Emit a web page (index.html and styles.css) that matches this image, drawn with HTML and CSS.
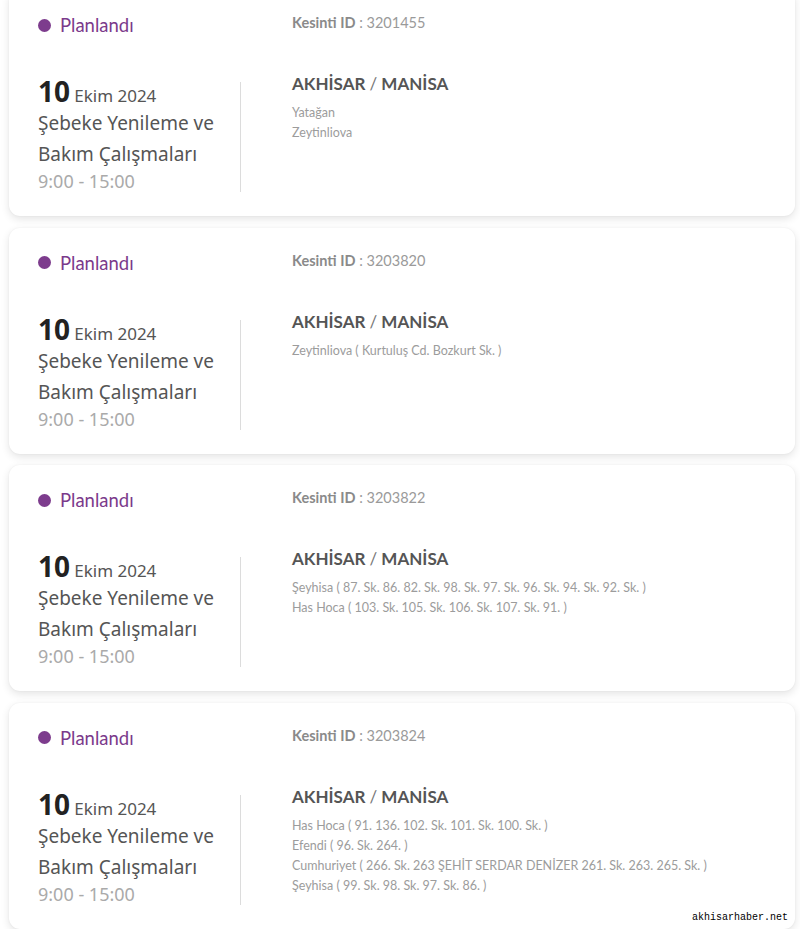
FILE: index.html
```html
<!DOCTYPE html>
<html lang="tr">

<head>
    <meta charset="UTF-8" />
    <meta name="viewport" content="width=device-width, initial-scale=1" />
    <title>Planlı Kesintiler</title>
    <link rel="stylesheet" href="styles.css">
</head>

<body>
    <div class="kesintiler">
        <div class="kart">
            <div class="ust">
                <div class="durum"><span class="nokta"></span>Planlandı</div>
                <div class="kid"><b>Kesinti ID</b> : 3201455</div>
            </div>
            <div class="govde">
                <div class="sol">
                    <div class="tarih"><span class="gun">10</span> <span class="ay">Ekim 2024</span></div>
                    <div class="baslik">Şebeke Yenileme ve Bakım Çalışmaları</div>
                    <div class="saat">9:00 - 15:00</div>
                </div>
                <div class="sag">
                    <h3>AKHİSAR <span>/</span> MANİSA</h3>
                    <ul class="mahalle">
                        <li>Yatağan</li>
                        <li>Zeytinliova</li>
                    </ul>
                </div>
            </div>
        </div>

        <div class="kart">
            <div class="ust">
                <div class="durum"><span class="nokta"></span>Planlandı</div>
                <div class="kid"><b>Kesinti ID</b> : 3203820</div>
            </div>
            <div class="govde">
                <div class="sol">
                    <div class="tarih"><span class="gun">10</span> <span class="ay">Ekim 2024</span></div>
                    <div class="baslik">Şebeke Yenileme ve Bakım Çalışmaları</div>
                    <div class="saat">9:00 - 15:00</div>
                </div>
                <div class="sag">
                    <h3>AKHİSAR <span>/</span> MANİSA</h3>
                    <ul class="mahalle">
                        <li>Zeytinliova ( Kurtuluş Cd. Bozkurt Sk. )</li>
                    </ul>
                </div>
            </div>
        </div>

        <div class="kart">
            <div class="ust">
                <div class="durum"><span class="nokta"></span>Planlandı</div>
                <div class="kid"><b>Kesinti ID</b> : 3203822</div>
            </div>
            <div class="govde">
                <div class="sol">
                    <div class="tarih"><span class="gun">10</span> <span class="ay">Ekim 2024</span></div>
                    <div class="baslik">Şebeke Yenileme ve Bakım Çalışmaları</div>
                    <div class="saat">9:00 - 15:00</div>
                </div>
                <div class="sag">
                    <h3>AKHİSAR <span>/</span> MANİSA</h3>
                    <ul class="mahalle">
                        <li>Şeyhisa ( 87. Sk. 86. 82. Sk. 98. Sk. 97. Sk. 96. Sk. 94. Sk. 92. Sk. )</li>
                        <li>Has Hoca ( 103. Sk. 105. Sk. 106. Sk. 107. Sk. 91. )</li>
                    </ul>
                </div>
            </div>
        </div>

        <div class="kart">
            <div class="ust">
                <div class="durum"><span class="nokta"></span>Planlandı</div>
                <div class="kid"><b>Kesinti ID</b> : 3203824</div>
            </div>
            <div class="govde">
                <div class="sol">
                    <div class="tarih"><span class="gun">10</span> <span class="ay">Ekim 2024</span></div>
                    <div class="baslik">Şebeke Yenileme ve Bakım Çalışmaları</div>
                    <div class="saat">9:00 - 15:00</div>
                </div>
                <div class="sag">
                    <h3>AKHİSAR <span>/</span> MANİSA</h3>
                    <ul class="mahalle">
                        <li>Has Hoca ( 91. 136. 102. Sk. 101. Sk. 100. Sk. )</li>
                        <li>Efendi ( 96. Sk. 264. )</li>
                        <li>Cumhuriyet ( 266. Sk. 263 ŞEHİT SERDAR DENİZER 261. Sk. 263. 265. Sk. )</li>
                        <li>Şeyhisa ( 99. Sk. 98. Sk. 97. Sk. 86. )</li>
                    </ul>
                </div>
            </div>
        </div>
    </div>

    <div class="filigran">akhisarhaber.net</div>
</body>

</html>
```

FILE: styles.css
```css
body {
    margin: 0;
    background: #ffffff;
    font-family: "Lato", "Noto Sans", sans-serif;
}

.kesintiler {
    display: flex;
    flex-direction: column;
    gap: 11.5px;
    padding: 0 5px 0 9px;
    margin-top: -10px;
}

.kart {
    background: #fff;
    border-radius: 11px;
    box-shadow: 0 3px 9px rgba(0, 0, 0, 0.11), 0 0 2px rgba(0, 0, 0, 0.06);
    padding: 23px 29px 24px;
    height: 226px;
    box-sizing: border-box;
}

/* Üst satır */
.ust {
    display: flex;
    align-items: flex-start;
}

.durum {
    width: 254px;
    display: flex;
    align-items: center;
    gap: 9px;
    font-size: 18.5px;
    line-height: 24px;
    color: #7b3a8b;
}

.nokta {
    width: 13px;
    height: 13px;
    border-radius: 50%;
    background: #7d3c8d;
}

.kid {
    margin-top: -2px;
    font-size: 14.5px;
    line-height: 24px;
    color: #9a9a9a;
}

.kid b {
    color: #8a8a8a;
}

/* Gövde */
.govde {
    display: flex;
    margin-top: 45px;
    height: 110px;
}

.sol {
    width: 202px;
    border-right: 1px solid #dcdcdc;
    font-family: "Noto Sans", sans-serif;
}

.tarih {
    line-height: 18px;
    height: 23px;
}

.gun {
    font-size: 28px;
    font-weight: 700;
    color: #222;
}

.ay {
    font-size: 17px;
    color: #555;
}

.baslik {
    margin-top: 3px;
    font-size: 19px;
    line-height: 31px;
    color: #555;
}

.saat {
    font-size: 18px;
    line-height: 22px;
    color: #aaa;
}

.sag {
    padding-left: 51px;
    margin-top: -9px;
}

.sag h3 {
    margin: 0;
    font-size: 17px;
    line-height: 22px;
    font-weight: 700;
    color: #555;
}

.sag h3 span {
    font-weight: 400;
    color: #777;
}

.mahalle {
    list-style: none;
    margin: 8px 0 0;
    padding: 0;
    font-size: 12.5px;
    line-height: 20px;
    color: #9c9c9c;
}

.filigran {
    position: absolute;
    top: 911px;
    right: 12px;
    font-family: "Liberation Mono", monospace;
    font-size: 10px;
    line-height: 14px;
    color: #000;
    background: #fff;
}
```
